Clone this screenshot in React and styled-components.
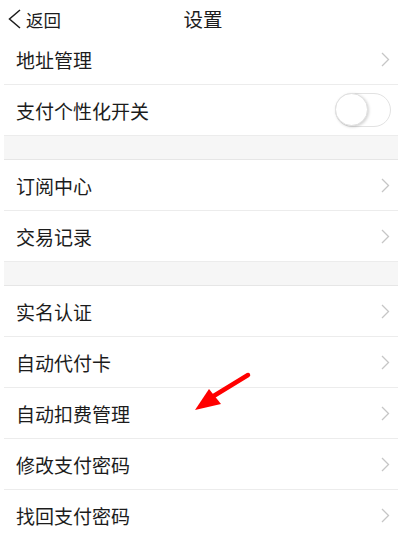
import React from "react";
import styled, { createGlobalStyle } from "styled-components";

const Global = createGlobalStyle`
  html, body { margin: 0; padding: 0; background: #ffffff; }
  body { font-family: "Noto Sans CJK SC", "Noto Sans", sans-serif; color: #1c1c1c; }
`;

const Page = styled.div`
  position: relative;
  width: 398px;
  height: 537px;
  overflow: hidden;
  background: #fff;
`;

const Header = styled.header`
  display: grid;
  grid-template-columns: 1fr auto 1fr;
  align-items: center;
  height: 34px;
  padding: 0 0 0 8px;
  box-sizing: border-box;
`;

const Back = styled.div`
  display: flex;
  align-items: center;
  gap: 5px;
  font-size: 17.5px;
  color: #1c1c1c;
  justify-self: start;
  margin-top: 4px;
`;

const Title = styled.div`
  font-size: 19.5px;
  color: #1c1c1c;
  margin-top: 2px;
`;

const List = styled.div`
  margin-left: 4px;
`;

const Row = styled.div`
  display: flex;
  align-items: center;
  justify-content: space-between;
  height: 51px;
  box-sizing: border-box;
  padding: 0 8px 0 12px;
  border-bottom: 1px solid #ececec;
  font-size: 19px;
  color: #1c1c1c;
`;

const Gap = styled.div`
  height: 23px;
  background: #f6f6f6;
  border-bottom: 1px solid #e6e6e6;
`;

const Switch = styled.div`
  position: relative;
  width: 56px;
  height: 34px;
  box-sizing: border-box;
  border: 1.5px solid #e2e2e2;
  border-radius: 17px;
  background: #fff;
  margin-right: -1px;
`;

const Knob = styled.div`
  position: absolute;
  left: -1px;
  top: -1px;
  width: 33px;
  height: 33px;
  box-sizing: border-box;
  border-radius: 50%;
  background: #fff;
  border: 1px solid #e0e0e0;
  box-shadow: 1px 1px 3px rgba(0, 0, 0, 0.18);
`;

const Arrow = styled.svg`
  position: absolute;
  left: 190px;
  top: 368px;
`;

const Chevron = () => (
  <svg width="9" height="15" viewBox="0 0 9 15">
    <path d="M1 1 L7.5 7.5 L1 14" fill="none" stroke="#c6c6c6" strokeWidth="1.3" />
  </svg>
);

const BackChevron = () => (
  <svg width="13" height="20" viewBox="0 0 13 20">
    <path d="M12 1 L1.5 10 L12 19" fill="none" stroke="#1c1c1c" strokeWidth="1.5" />
  </svg>
);

const groups = [
  [
    { label: "地址管理" },
    { label: "支付个性化开关", toggle: true },
  ],
  [{ label: "订阅中心" }, { label: "交易记录" }],
  [
    { label: "实名认证" },
    { label: "自动代付卡" },
    { label: "自动扣费管理" },
    { label: "修改支付密码" },
    { label: "找回支付密码" },
  ],
];

export default function App() {
  return (
    <Page>
      <Global />
      <Header>
        <Back>
          <BackChevron />
          <span>返回</span>
        </Back>
        <Title>设置</Title>
        <div />
      </Header>
      <List>
        {groups.map((g, gi) => (
          <React.Fragment key={gi}>
            {gi > 0 && <Gap />}
            {g.map((item) => (
              <Row key={item.label}>
                <span>{item.label}</span>
                {item.toggle ? (
                  <Switch>
                    <Knob />
                  </Switch>
                ) : (
                  <Chevron />
                )}
              </Row>
            ))}
          </React.Fragment>
        ))}
      </List>
      <Arrow width="64" height="48" viewBox="0 0 64 48">
        <line x1="58" y1="7" x2="22" y2="29" stroke="#ff0000" strokeWidth="4.5" strokeLinecap="round" />
        <polygon points="5,42 19,21 31,36" fill="#ff0000" />
      </Arrow>
    </Page>
  );
}
